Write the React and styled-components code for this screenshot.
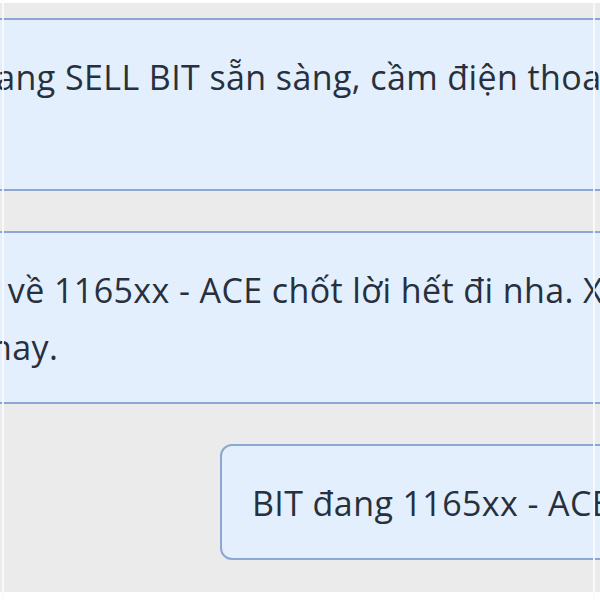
import React from 'react';
import styled, { createGlobalStyle } from 'styled-components';

const Global = createGlobalStyle`
    html, body {
        margin: 0;
        padding: 0;
        background: #ffffff;
    }
    body {
        font-family: "Open Sans", "Noto Sans", sans-serif;
    }
`

// offset = how far the bubble text starts left of the visible pane
const messages = [
    {
        id: 1,
        side: 'left',
        offset: 220,
        lines: ['Hiện tại BIT đang SELL BIT sẵn sàng, cầm điện thoai canh vào lệnh', 'nhé.'],
    },
    {
        id: 2,
        side: 'left',
        offset: 111,
        lines: ['BIT giờ về 1165xx - ACE chốt lời hết đi nha. Xả hàng luôn', 'Chiều nay.'],
    },
    {
        id: 3,
        side: 'right',
        offset: 0,
        lines: ['BIT đang 1165xx - ACE chú ý nhé'],
    },
];

const Chat = () => {
    return (
        <>
            <Global />
            <Viewport>
                <Thread>
                    {messages.map(msg => (
                        <Bubble key={msg.id} $side={msg.side} $offset={msg.offset}>
                            {msg.lines.map((line, i) => (
                                <Line key={i}>{line}</Line>
                            ))}
                        </Bubble>
                    ))}
                </Thread>
            </Viewport>
        </>
    );
};

const Viewport = styled.div`
    width: 600px;
    height: 600px;
    box-sizing: border-box;
    padding: 3px 0 8px;
    overflow: hidden;
    position: relative;
    background: #ffffff;

    /* pane edges that sit over the thread */
    &::before,
    &::after {
        content: '';
        position: absolute;
        top: 0;
        bottom: 0;
        width: 2px;
        background: rgba(250, 251, 253, 0.85);
        z-index: 2;
    }
    &::before {
        left: 2px;
    }
    &::after {
        left: 593px;
    }
`

const Thread = styled.div`
    height: 100%;
    background: #ebebeb;
    display: flex;
    flex-direction: column;
    align-items: flex-start;
    gap: 40px;
    padding-top: 15px;
    box-sizing: border-box;
    overflow: hidden;
`

const Bubble = styled.div`
    flex: none;
    box-sizing: border-box;
    background: #e3effc;
    border: 2px solid #8ca7d3;
    border-radius: 12px;
    padding: 29px 30px 26px;
    color: #27303d;
    font-size: 34px;
    letter-spacing: 0.4px;
    line-height: 57px;
    white-space: nowrap;
    margin-left: ${p => (p.$side === 'right' ? '220px' : `-${p.$offset + 32}px`)};
    width: ${p => (p.$side === 'right' ? '800px' : '1700px')};
`

const Line = styled.div``

export default Chat;
